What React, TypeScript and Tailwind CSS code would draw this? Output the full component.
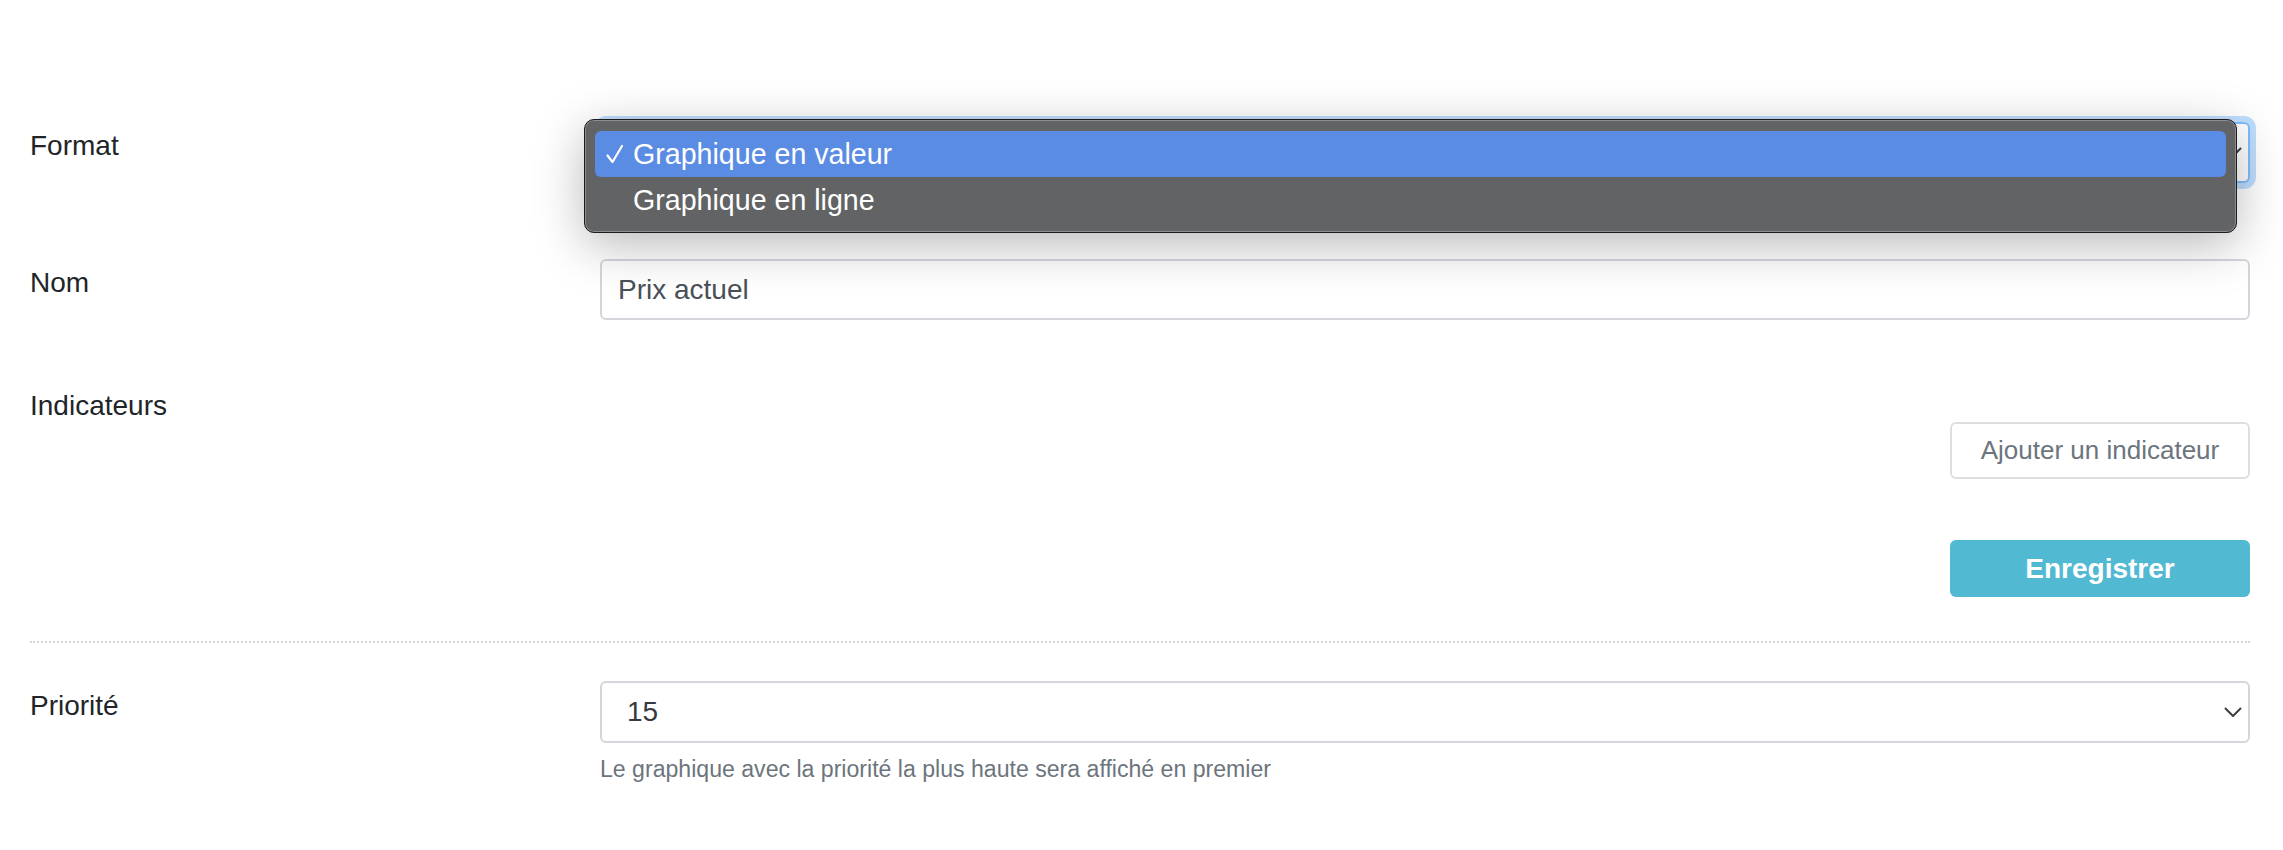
import { useState } from "react";

// Chevron used by native selects
const Chevron = () => (
  <svg width="18" height="11" viewBox="0 0 18 11" fill="none" stroke="#3b3f44" strokeWidth="2" strokeLinecap="round" strokeLinejoin="round">
    <path d="M1.5 1.5 L9 9 L16.5 1.5" />
  </svg>
);

const Check = () => (
  <svg width="20" height="22" viewBox="0 0 20 22" fill="none" stroke="#ffffff" strokeWidth="2.2" strokeLinecap="round" strokeLinejoin="round">
    <path d="M2.5 12.5 L7.5 19 L17 3" />
  </svg>
);

const options = ["Graphique en valeur", "Graphique en ligne"];

const App = () => {
  const [format] = useState(options[0]);
  const [name, setName] = useState("Prix actuel");

  return (
    <div className="min-h-screen bg-white pl-[30px] pr-[33px] pt-[122px] font-['Liberation_Sans',Arial,sans-serif] text-[#212529]">
      {/* Format */}
      <div className="flex">
        <label className="w-[570px] pt-[3px] text-[28px] leading-[42px]">Format</label>
        <div className="relative flex-1">
          {/* the select itself, hidden under its open menu */}
          <div className="flex h-[61px] items-center justify-between rounded-[6px] border-2 border-[#80bdff] bg-white pl-[25px] pr-[6px] text-[28px] text-[#495057] shadow-[0_0_0_6px_rgba(0,123,255,0.25)]">
            <span className="invisible">{format}</span>
            <Chevron />
          </div>

          {/* open native menu */}
          <div className="absolute left-[-16px] right-[13px] top-[-3px] h-[114px] rounded-[10px] border border-[#1c1c1e] bg-[#626365] px-[10px] pt-[11px] shadow-[0_12px_50px_rgba(0,0,0,0.28),inset_0_0_0_1px_rgba(255,255,255,0.28)]">
            {options.map((opt) => (
              <div
                key={opt}
                className={`flex h-[46px] items-center rounded-[6px] text-[28.6px] text-white ${
                  opt === format ? "bg-[#5b8ce3]" : ""
                }`}
              >
                <span className="flex w-[38px] justify-center pl-[2px]">{opt === format && <Check />}</span>
                <span>{opt}</span>
              </div>
            ))}
          </div>
        </div>
      </div>

      {/* Nom */}
      <div className="mt-[76px] flex">
        <label className="w-[570px] pt-[3px] text-[28px] leading-[42px]">Nom</label>
        <input
          className="h-[61px] flex-1 rounded-[6px] border-2 border-[#d3d7dc] px-[16px] text-[28px] text-[#495057] outline-none"
          value={name}
          onChange={(e) => setName(e.target.value)}
        />
      </div>

      {/* Indicateurs */}
      <div className="mt-[62px] flex">
        <label className="w-[570px] pt-[3px] text-[28px] leading-[42px]">Indicateurs</label>
        <div className="flex flex-1 flex-col items-end pt-[40px]">
          <button className="h-[57px] w-[300px] rounded-[6px] border-2 border-[#dcdfe2] bg-white text-[26px] text-[#6c757d]">
            Ajouter un indicateur
          </button>
          <button className="mt-[61px] h-[57px] w-[300px] rounded-[6px] bg-[#52b9d3] text-[28px] font-bold text-white">
            Enregistrer
          </button>
        </div>
      </div>

      <div className="mt-[44px] border-t-2 border-dotted border-[#d6d6d6]" />

      {/* Priorité */}
      <div className="mt-[38px] flex">
        <label className="w-[570px] pt-[4px] text-[28px] leading-[42px]">Priorité</label>
        <div className="flex-1">
          <div className="flex h-[62px] items-center justify-between rounded-[6px] border-2 border-[#d3d7dc] pl-[25px] pr-[6px] text-[28px] text-[#343a40]">
            <span>15</span>
            <Chevron />
          </div>
          <p className="mt-[10px] text-[23.1px] leading-[33px] text-[#6c757d]">
            Le graphique avec la priorité la plus haute sera affiché en premier
          </p>
        </div>
      </div>
    </div>
  );
};

export default App;
